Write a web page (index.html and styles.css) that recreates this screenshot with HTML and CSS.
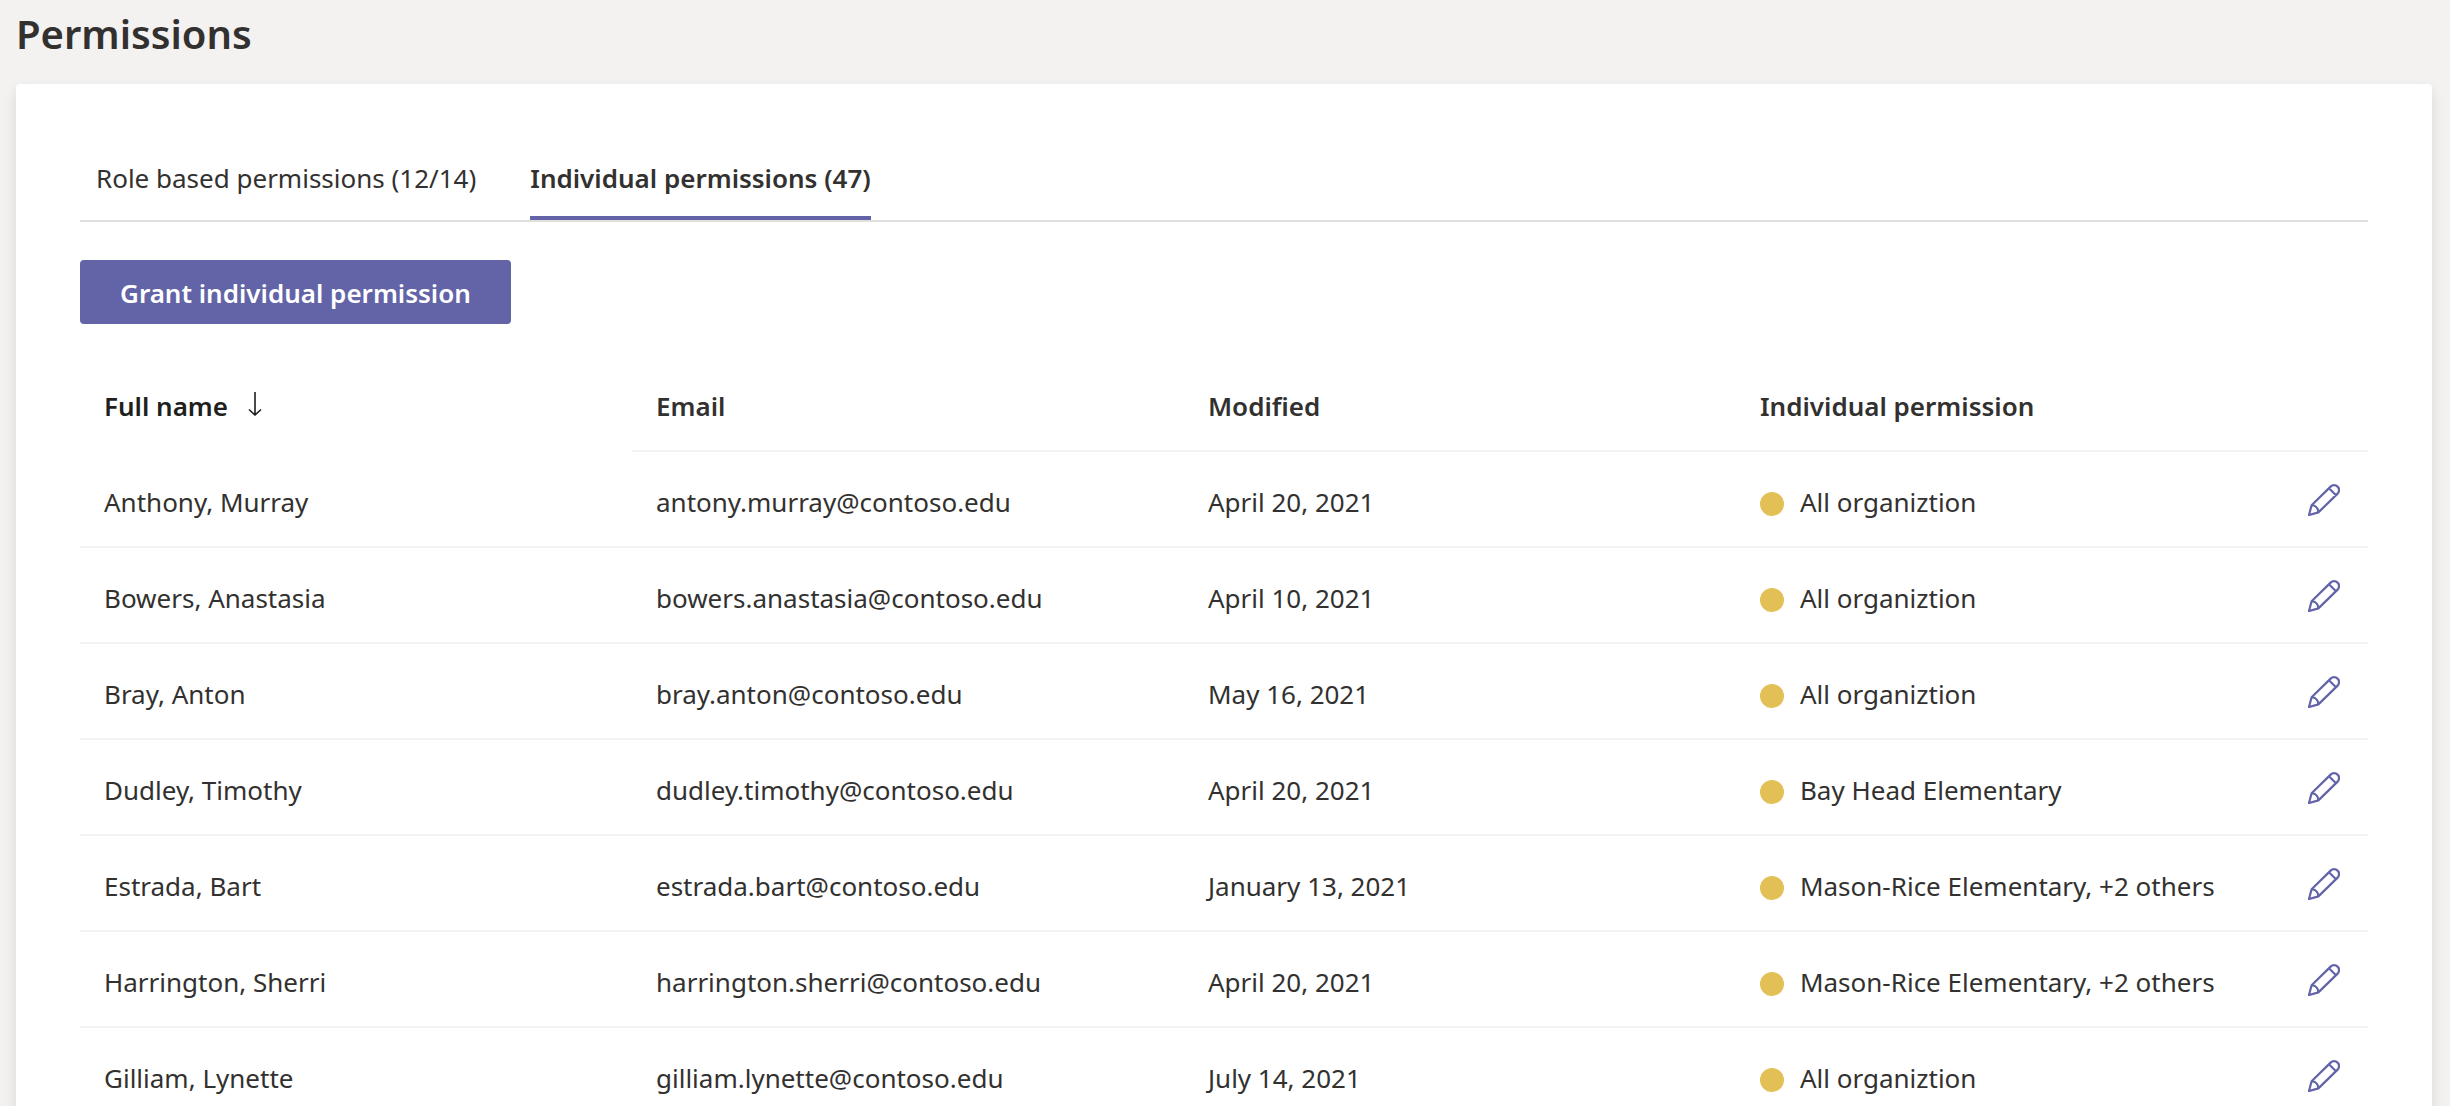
FILE: index.html
```html
<!DOCTYPE html>
<html lang="en">
<head>
<meta charset="utf-8">
<meta name="viewport" content="width=device-width, initial-scale=1">
<title>Permissions</title>
<link rel="stylesheet" href="styles.css">
</head>
<body>
<svg class="sprite" aria-hidden="true">
  <symbol id="pencil" viewBox="0 0 32 32">
    <path d="M1 31 3.600 21.200 22.600 2.600a4.900 4.900 0 0 1 7 7L10.400 28.400Z M21 4.200l7 7 M3.600 21.200c3.800.2 6.600 3 6.800 7.200" fill="none" stroke="currentColor" stroke-width="2.200" stroke-linejoin="round"/>
  </symbol>
</svg>
<div class="page">
  <h1 class="page-title">Permissions</h1>
  <main class="card">
    <div class="tabs" role="tablist">
      <button class="tab" type="button" role="tab" aria-selected="false">Role based permissions (12/14)</button>
      <button class="tab tab-active" type="button" role="tab" aria-selected="true">Individual permissions (47)</button>
    </div>
    <button class="grant-button" type="button">Grant individual permission</button>
    <table class="people">
      <colgroup><col><col><col><col><col class="col-action"></colgroup>
      <thead>
        <tr>
          <th class="sorted" scope="col" aria-sort="ascending"><span class="sort-label">Full name <svg class="sort-icon" viewBox="0 0 14 24" aria-hidden="true"><path d="M7 0v22.500M1 17.500l6 5.500 6-5.500" fill="none" stroke="currentColor" stroke-width="1.600"/></svg></span></th>
          <th scope="col">Email</th>
          <th scope="col">Modified</th>
          <th scope="col" colspan="2">Individual permission</th>
        </tr>
      </thead>
      <tbody>
        <tr><td>Anthony, Murray</td><td>antony.murray@contoso.edu</td><td>April 20, 2021</td><td><span class="scope">All organiztion</span></td><td class="action"><button class="edit" type="button" aria-label="Edit"><svg class="icon"><use href="#pencil"/></svg></button></td></tr>
        <tr><td>Bowers, Anastasia</td><td>bowers.anastasia@contoso.edu</td><td>April 10, 2021</td><td><span class="scope">All organiztion</span></td><td class="action"><button class="edit" type="button" aria-label="Edit"><svg class="icon"><use href="#pencil"/></svg></button></td></tr>
        <tr><td>Bray, Anton</td><td>bray.anton@contoso.edu</td><td>May 16, 2021</td><td><span class="scope">All organiztion</span></td><td class="action"><button class="edit" type="button" aria-label="Edit"><svg class="icon"><use href="#pencil"/></svg></button></td></tr>
        <tr><td>Dudley, Timothy</td><td>dudley.timothy@contoso.edu</td><td>April 20, 2021</td><td><span class="scope">Bay Head Elementary</span></td><td class="action"><button class="edit" type="button" aria-label="Edit"><svg class="icon"><use href="#pencil"/></svg></button></td></tr>
        <tr><td>Estrada, Bart</td><td>estrada.bart@contoso.edu</td><td>January 13, 2021</td><td><span class="scope">Mason-Rice Elementary, +2 others</span></td><td class="action"><button class="edit" type="button" aria-label="Edit"><svg class="icon"><use href="#pencil"/></svg></button></td></tr>
        <tr><td>Harrington, Sherri</td><td>harrington.sherri@contoso.edu</td><td>April 20, 2021</td><td><span class="scope">Mason-Rice Elementary, +2 others</span></td><td class="action"><button class="edit" type="button" aria-label="Edit"><svg class="icon"><use href="#pencil"/></svg></button></td></tr>
        <tr><td>Gilliam, Lynette</td><td>gilliam.lynette@contoso.edu</td><td>July 14, 2021</td><td><span class="scope">All organiztion</span></td><td class="action"><button class="edit" type="button" aria-label="Edit"><svg class="icon"><use href="#pencil"/></svg></button></td></tr>
      </tbody>
    </table>
  </main>
</div>
</body>
</html>
```
FILE: styles.css
```css
* {
  box-sizing: border-box;
}

body {
  margin: 0;
  background: #f3f2f1;
  color: #323130;
  font-family: "Segoe UI", "Noto Sans", "Open Sans", sans-serif;
  font-size: 26px;
  line-height: 36px;
}

button {
  margin: 0;
  padding: 0;
  border: 0;
  background: none;
  color: inherit;
  font: inherit;
  cursor: pointer;
}

.sprite {
  display: none;
}

.page {
  height: 100vh;
  padding: 0 18px 0 16px;
  overflow: hidden;
}

.page-title {
  margin: 0;
  padding: 4px 0 20px;
  font-size: 40px;
  font-weight: 600;
  line-height: 60px;
}

.card {
  padding: 64px;
  border-radius: 4px;
  background: #fff;
  box-shadow: 0 6px 14px rgba(0, 0, 0, 0.11);
}

.tabs {
  display: flex;
  gap: 38px;
  border-bottom: 2px solid #e1dfdd;
}

.tab {
  padding: 12px 0 20px;
  border-bottom: 4px solid transparent;
}

.tab:first-child {
  padding-left: 16px;
  padding-right: 16px;
}

.tab-active {
  border-bottom-color: #6264a7;
  font-weight: 600;
}

.grant-button {
  display: block;
  height: 64px;
  margin: 38px 0 32px;
  padding: 2px 40px 0;
  border-radius: 4px;
  background: #6264a7;
  color: #fff;
  font-weight: 600;
}

.people {
  width: 100%;
  border-collapse: separate;
  border-spacing: 0;
  table-layout: fixed;
}

.col-action {
  width: 80px;
}

.people th,
.people td {
  height: 96px;
  padding: 6px 0 0 24px;
  border-bottom: 2px solid #f3f2f1;
  text-align: left;
  white-space: nowrap;
}

.people th {
  font-weight: 600;
}

.people .sorted {
  border-bottom-color: transparent;
  color: #201f1e;
}

.sort-label {
  display: flex;
  align-items: center;
  gap: 20px;
}

.sort-icon {
  width: 14px;
  height: 24px;
  margin-bottom: 4px;
}

.scope {
  display: flex;
  align-items: center;
  gap: 16px;
}

.scope::before {
  content: "";
  width: 24px;
  height: 24px;
  margin-top: 4px;
  border-radius: 50%;
  background: #e2c056;
}

.people .action {
  padding: 2px 28px 0 20px;
}

.edit {
  display: block;
  color: #6264a7;
}

.icon {
  display: block;
  width: 32px;
  height: 32px;
}
```
